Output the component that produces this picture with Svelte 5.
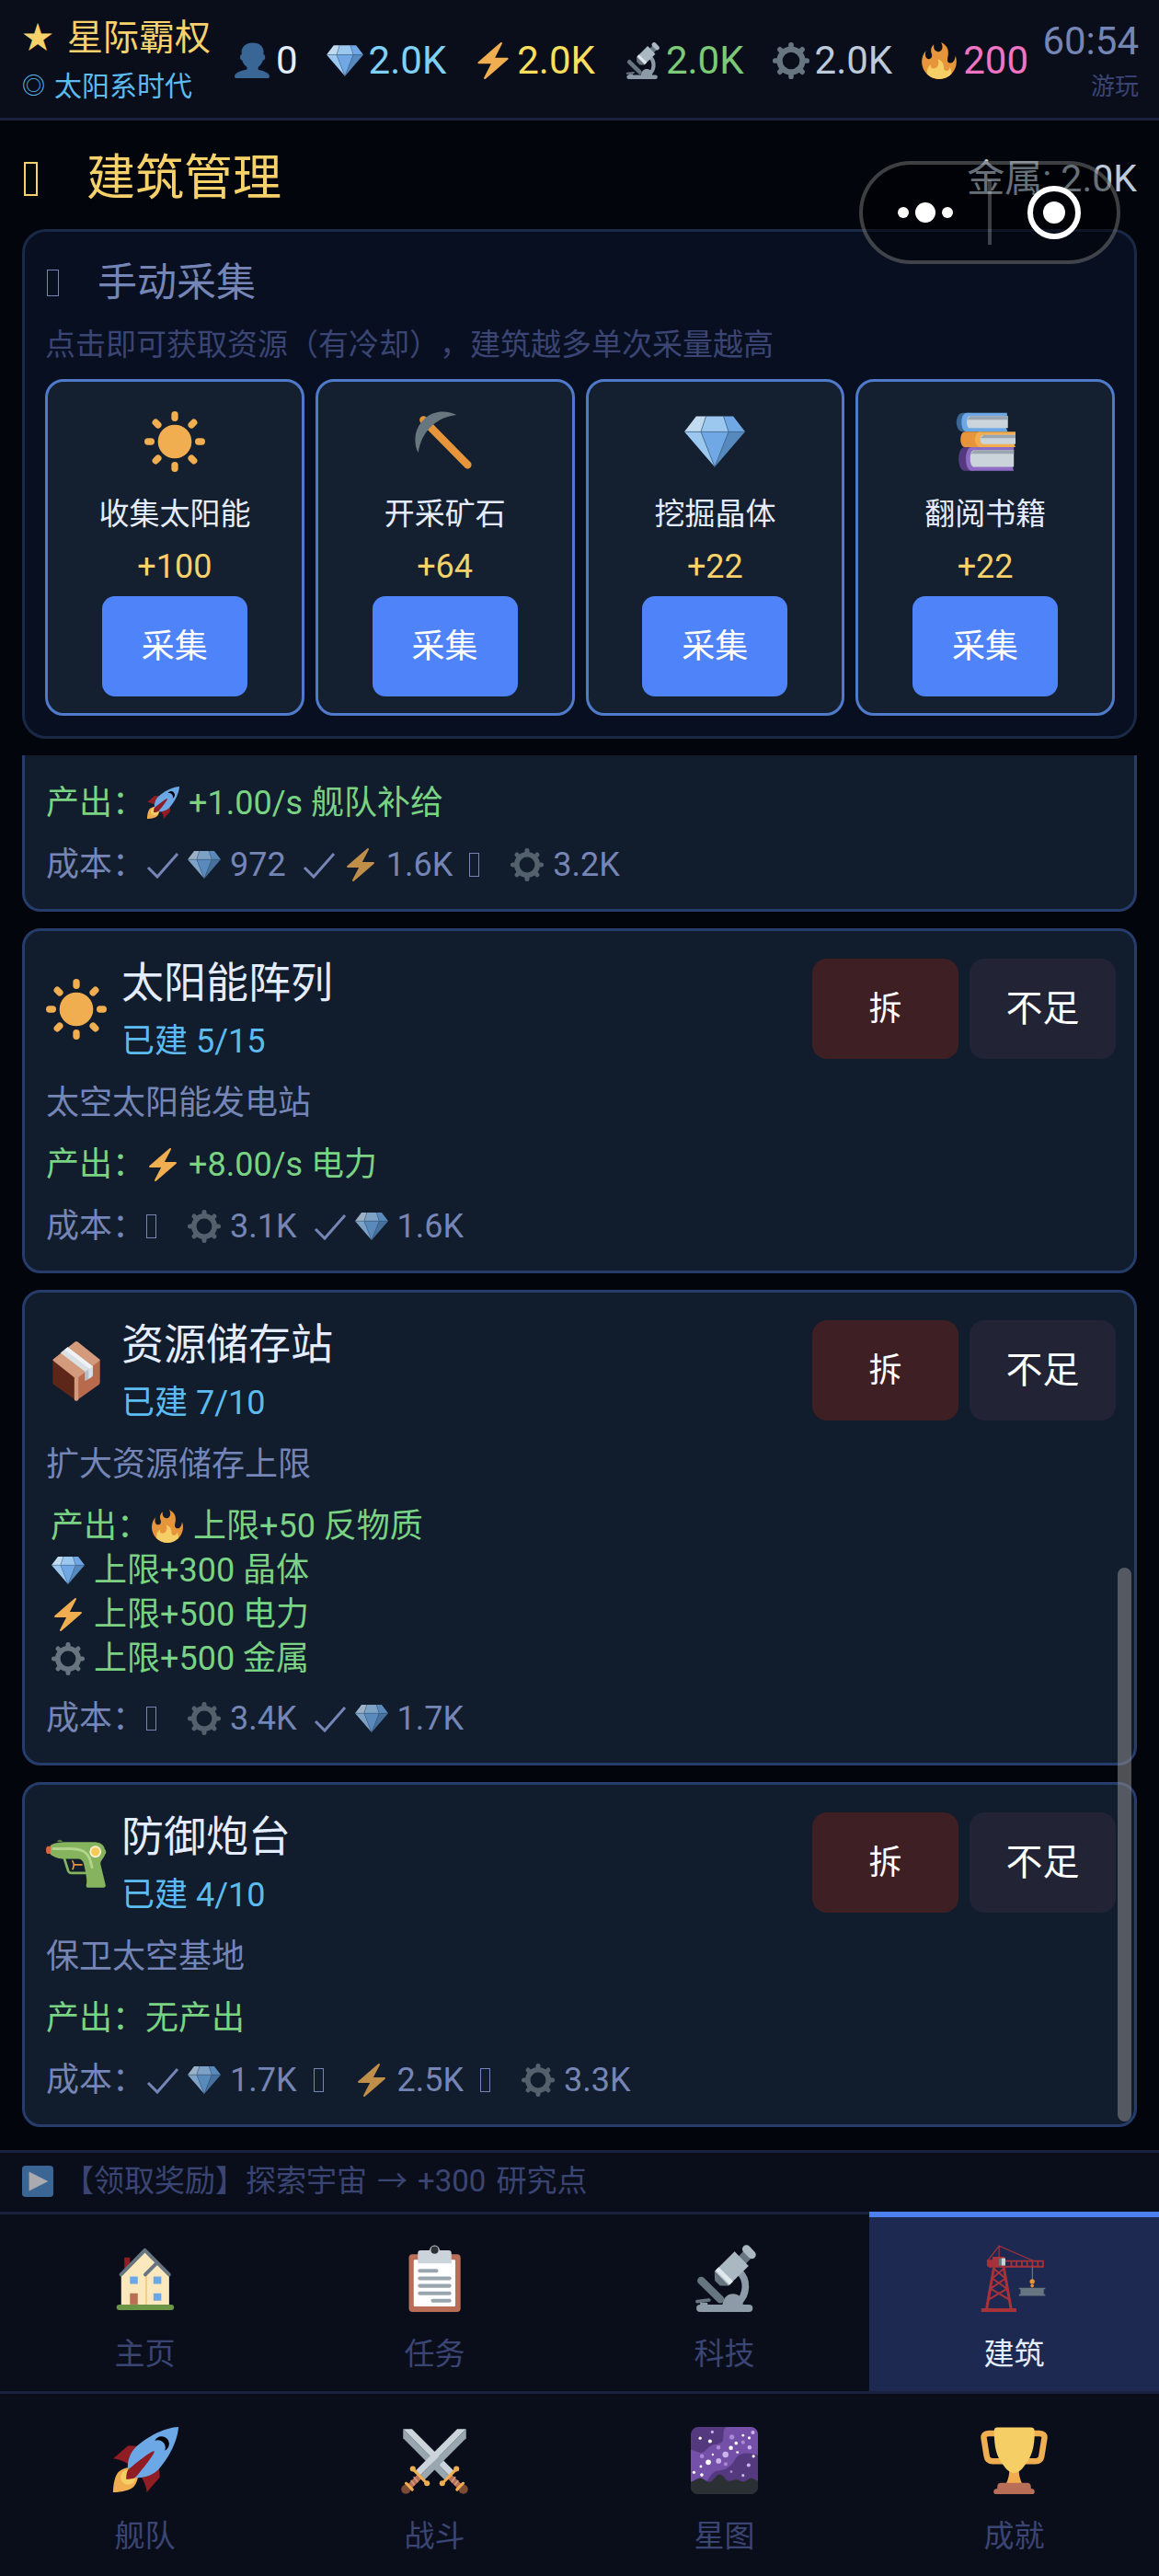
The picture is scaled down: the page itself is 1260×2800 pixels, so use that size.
<script lang="ts">
  const spokes = [0, 45, 90, 135, 180, 225, 270, 315];
  const rays = (attrs: string) =>
    spokes.map((a) => `<rect ${attrs} transform="rotate(${a} 18 18)"/>`).join('');

  const stars = [
    [5, 6, 0.8], [11.5, 2.7, 0.8], [10.3, 7.6, 1], [22, 5.4, 1.3], [28, 4.5, 0.7], [33.3, 3, 1], [31.3, 5.8, 0.8],
    [28, 8.2, 1], [24.3, 8.7, 0.9], [31.5, 11, 1.1], [21.5, 11.2, 1.1], [14.8, 11, 1.1], [25, 13.6, 0.7], [18.6, 14.8, 1.6],
    [11.8, 14.8, 0.6], [6, 15.7, 1.1], [33.6, 15.7, 0.8], [14.9, 18.2, 1.4], [9.4, 18.9, 1.4], [18.7, 19.9, 1],
    [5.4, 21.2, 0.7], [31, 20.5, 1], [1.7, 24.3, 0.8], [21.7, 24, 0.7], [5.9, 25.7, 0.9], [28, 26, 0.8]
  ];
  const starTint = ['#fff', '#c9b5ea', '#fff', '#a98ad6'];

  const icons: Record<string, string> = {
    gem: `<path fill="#c3dbf0" d="M7 3h5.8L9.8 12.2H0z"/><path fill="#9cc8f0" d="M12.8 3h10.4l3 9.2H9.8zM0 12.2h9.8L18 33z"/><path fill="#6fa8e4" d="M23.2 3H29l7 9.2h-9.8zM9.8 12.2h16.4L18 33z"/><path fill="#5689bd" d="M26.2 12.2H36L18 33z"/><path fill="none" stroke="#42698f" stroke-width=".4" d="M0 12.2h36M12.8 3l-3 9.2L18 33l8.2-20.8-3-9.2"/>`,
    bolt: `<path fill="#f0ae50" d="M32.938 15.651C32.792 15.26 32.418 15 32 15H19.925L26.89 1.458c.219-.426.106-.947-.271-1.243C26.437.071 26.218 0 26 0c-.233 0-.466.082-.653.243L18 6.588 3.347 19.243c-.316.273-.43.714-.284 1.105S3.582 21 4 21h12.075L9.11 34.542c-.219.426-.106.947.271 1.243.182.144.401.215.619.215.233 0 .466-.082.653-.243L18 29.412l14.653-12.655c.317-.273.43-.714.285-1.106z"/>`,
    fire: `<path fill="#e6953a" d="M35 19c0-2.062-.367-4.039-1.04-5.868-.46 5.389-3.333 8.157-6.335 6.868-2.812-1.208-.917-5.917-.777-8.164.236-3.809-.012-8.169-6.931-11.794 2.875 5.5.333 8.917-2.333 9.125-2.958.231-5.667-2.542-4.667-7.042-3.238 2.386-3.332 6.402-2.333 9 1.042 2.708-.042 4.958-2.583 5.208-2.84.28-4.418-3.041-2.963-8.333C2.52 10.965 1 14.805 1 19c0 9.389 7.611 17 17 17s17-7.611 17-17z"/><path fill="#f5ce66" d="M28.394 23.999c.148 3.084-2.561 4.293-4.019 3.709-2.106-.843-1.541-2.291-2.083-5.291s-2.625-5.083-5.708-6c2.25 6.333-1.247 8.667-3.08 9.084-1.872.426-3.753-.001-3.968-4.007C7.352 23.668 6 26.676 6 30c0 .368.023.73.055 1.09C9.125 34.124 13.342 36 18 36s8.875-1.876 11.945-4.91c.032-.36.055-.722.055-1.09 0-2.187-.584-4.236-1.606-6.001z"/>`,
    sun: `<g fill="#f0ae50">${rays('x="16" y="0" width="4" height="6" rx="2"')}<circle cx="18" cy="18" r="10"/></g>`,
    gear: `<g fill="#66757f">${rays('x="15.5" y="0" width="5" height="8" rx="2.3"')}<circle cx="18" cy="18" r="11.2" fill="none" stroke="#66757f" stroke-width="5.6"/></g>`,
    rocket: `<path fill="#901c24" d="M1 17l8-7 16 1 1 16-7 8s.001-5.999-6-12-12-6-12-6z"/><path fill="#f0ae50" d="M.973 35s-.036-7.979 2.985-11S15 21.187 15 21.187 14.999 29 11.999 32c-3 3-11.026 3-11.026 3z"/><circle fill="#f5ce66" cx="9" cy="27" r="4"/><path fill="#6ca8e6" d="M35.999 0s-10 0-22 10c-6 5-6 14-4 16s11 2 16-4c10-12 10-22 10-22z"/><path fill="#000" d="M26.999 5c-1.623 0-3.013.971-3.641 2.36.502-.227 1.055-.36 1.641-.36 2.209 0 4 1.791 4 4 0 .586-.133 1.139-.359 1.64 1.389-.627 2.359-2.017 2.359-3.64 0-2.209-1.791-4-4-4z"/><path fill="#901c24" d="M8 28s0-4 1-5 13.001-10.999 14-10-9.001 13-10.001 14S8 28 8 28z"/>`,
    person: `<path fill="#3a6696" d="M24 26.799v-2.566c2-1.348 4.08-3.779 4.703-6.896.186.103.206.17.413.17.991 0 1.709-1.287 1.709-2.873 0-1.562-.823-2.827-1.794-2.865.187-.674.293-1.577.293-2.735C29.324 5.168 26 .527 18.541.527c-6.629 0-10.777 4.641-10.777 8.507 0 1.123.069 2.043.188 2.755-.911.137-1.629 1.352-1.629 2.845 0 1.587.804 2.873 1.796 2.873.206 0 .025-.067.209-.17C8.952 20.453 11 22.885 13 24.232v2.414c-5 .645-12 3.437-12 6.23v1.061C1 35 2.076 35 3.137 35h29.725C33.924 35 35 35 35 33.938v-1.061c0-2.615-6-5.225-11-6.078z"/>`,
    scope: `<path fill="none" stroke="#8c9ba7" stroke-width="3.8" d="M26 14.5c4.6 4 4.4 12.500-.8 16.500"/><path fill="#8c9ba7" d="M5 32h12c.4-3.600 2.600-5.800 5.600-5.800S28 28.500 28 32h3.200a2 2 0 0 1 0 4H5a2 2 0 0 1 0-4z"/><path stroke="#66757f" stroke-width="4.200" stroke-linecap="round" d="M5.600 19.200l10.200 10"/><path stroke="#66757f" stroke-width="1.800" stroke-linecap="round" d="M3.400 30.400l6.400-.8"/><path fill="#8c9ba7" d="M5 31h4v1.500H5z"/><path fill="#66757f" d="M12.700 14.500l.2 4.700 2.800 2.800h4.500zM28.400 3.200l4 4-3.600 3.800-4-4z"/><path fill="#aab8c2" d="M23.500 3.600l7.500 7.800L20.200 22l-7.500-7.700z"/><path fill="#e1e8ed" d="M15 11.900l7.700 7.700-1.800 1.800-7.700-7.700z"/><path stroke="#aab8c2" stroke-width="4.400" stroke-linecap="round" d="M29.800 2.300l2.900 3"/>`,
    pick: `<path stroke="#e6953a" stroke-width="4.600" stroke-linecap="round" d="M5.100 5.200l26.200 26.600"/><path fill="#68777f" d="M24.700 2.200C19-.8 10.500-.6 5.300 4.900-.6 10.600-.9 19 2 24.700 3 18 5.500 13.200 9.300 9.400 13 5.700 18 3 24.700 2.200z"/>`,
    books: `<path fill="#3a6696" d="M5 1h5v11.200H5C2.300 12.200 1 9.500 1 6.600S2.300 1 5 1z"/><path fill="#6ca8e6" d="M7.500 1H31v2l-.5 7 .8 2.200H7.500C5 12.200 4 9.800 4 6.600S5 1 7.500 1z"/><path fill="#ccd4db" d="M9 2.800h22.500V10H9C6.500 10 6.500 2.800 9 2.800z"/><path fill="#99a6b0" d="M9 2.800h22.500V5H7.200z"/><path fill="#e6953a" d="M6 12.200h9v9.100H6c-3.400 0-3.400-9.100 0-9.100z"/><path fill="#f0ae50" d="M15 12.200h21V14l-1 5 1 2.300H15c-4 0-4-9.100 0-9.100z"/><path fill="#ccd4db" d="M17 14h19v5.500H17c-2.600 0-2.600-5.500 0-5.500z"/><path fill="#99a6b0" d="M17 14h19v2H15.300z"/><path fill="#54397f" d="M6 21.300h6v14H6c-5 0-5-14 0-14z"/><path fill="#8e6cc4" d="M10 21.300h25V23l-1 9 1 3.300H10c-4.600 0-4.600-14 0-14z"/><path fill="#ccd4db" d="M11.500 23H35v10H11.500c-3.200 0-3.200-10 0-10z"/><path fill="#99a6b0" d="M11.500 23H35v2.200H9.400z"/>`,
    box: `<path fill="#5c2619" d="M4 11.500l14 10.700v13.500L4.800 26.300c-.5-.4-.8-.8-.8-1.500z"/><path fill="#b9694c" d="M32 11.500L18 22.200v13.500l13.200-9.400c.5-.4.8-.8.8-1.500z"/><path fill="#d49a7c" d="M17.200.8c.6-.4 1-.4 1.600 0L31.600 11c.5.400.5.700 0 1.100L19.200 22v13.200c-.6.900-1.800.9-2.400 0V22L4.400 12.100c-.5-.4-.5-.7 0-1.100z"/><path fill="#d9dfe3" d="M12.900 4l14.900 11.400v5.100c0 .8-.6 1.200-1.200 1.600l-3.400 1.700v-5.200L8.600 7.300z"/><path fill="#b4bfc7" d="M23.200 18.600l2-1.400v5.600l-2 1z"/><path fill="#eef2f4" d="M12.900 4l14.900 11.400-2 1.400L11 5.500z"/>`,
    gun: `<path fill="none" stroke="#86b35e" stroke-width="1.500" d="M10.600 14.500l2.600 8.200c.3.800.8 1.200 1.800 1.200h9"/><path fill="none" stroke="#e6953a" stroke-width=".9" d="M15.500 16.500c1.400 1.800 1.300 3.400.2 5.500M16.600 19h5"/><path fill="#d9643c" d="M2.800 8H1.500C.3 8 0 9 0 10.300s.3 2.300 1.500 2.300h1.300z"/><path fill="#577a3c" d="M6.500 5.500c.5-1.700 2.500-1.700 3.500 0z"/><path fill="#86b35e" d="M2.700 7.500C6 5.300 12 5.600 18 5.600h10c3.800 0 6.500 1.300 6.900 4.400.9.200.9 2.600.1 3-.4 2-2.700 3.400-2.700 5.500L35.300 31c.2 1-.4 1.600-1.300 1.600h-9c-.9 0-1.400-.9-1.100-1.800.8-2.300-.6-8.500-1.500-12.300-.5-2-1.600-3-3.400-3H10c-3.300 0-5.300-1.200-7.300-2.500z"/><path fill="none" stroke="#b2d48c" stroke-width="1.600" stroke-linecap="round" d="M4.300 9.500h10c7 0 10 2 11.800 6.500l1.200 4.500"/><circle cx="29.300" cy="11.300" r="3.500" fill="#fff1cf"/><circle cx="29.300" cy="11.300" r="2.500" fill="#f5c95a"/>`,
    house: `<path fill="#901c24" d="M7 6.800h3V15H7z"/><path fill="#fbe8bd" d="M5.300 16L18 3l13 13v16.500H5.300z"/><path fill="#f5ce80" d="M18.200 16h1v16h-1z"/><path fill="none" stroke="#66757f" stroke-width="1.900" stroke-linecap="round" stroke-linejoin="round" d="M5.200 16L18 2.900 31 16M24.500 9.700L18.200 16"/><path fill="#6ca8e6" d="M10 17h4.200v4H10zM22.600 17h4.200v4h-4.200zM22.600 26h4.200v4h-4.200z"/><path fill="#b96f52" d="M10 26h4.200v6H10z"/><rect x="2.800" y="32" width="30.800" height="3" rx="1.500" fill="#6b9645"/>`,
    clip: `<rect x="4.200" y="5" width="27.700" height="31" rx="2" fill="#b96f57"/><rect x="6.800" y="8" width="22.300" height="25" rx=".6" fill="#fff"/><path fill="#ccd4db" d="M10.500 3h4.800a2.700 2.700 0 0 1 5.400 0h4.800c1 0 1.500.6 1.500 1.500V10H9V4.500C9 3.600 9.500 3 10.500 3z"/><circle cx="18" cy="2.800" r="2" fill="#2b3034"/><path stroke="#99a6b0" stroke-width="2" stroke-linecap="round" d="M10 13.900h9M10 18h16M10 22h16M10 26h16M17 30h9"/>`,
    crane: `<g fill="none" stroke="#a8323a"><path stroke-width="1.500" d="M7.200 12L3.300 34M12.400 12l3.900 22"/><path stroke-width="1" d="M6.800 12.500l6.600 5.500M12.800 12.500L6.300 18M6.300 18l7.800 5.500M13.400 18l-8 5.500M5.400 23.500l9.800 5.800M14.300 23.500l-9.800 5.800"/><path stroke-width=".6" d="M3.800 8.600L9.900.6l18 7.800M9.900.6v7"/><path stroke-width=".9" d="M13 8.700h20.500v3H13M16.500 8.700v3M19.300 8.700v3M22.200 8.700v3M25 8.700v3M27.800 8.700v3M30.700 8.700v3"/></g><path fill="#a8323a" d="M.4 34h18.800v2H.4zM3.400 8h3V6.400h6.500v5.800H4.600l-1.200-1z"/><path fill="#66757f" d="M9.800 7.200h1.700v3.900H9.800z"/><path fill="#ccd4db" d="M11.300 7.200h2v3.900h-2z"/><path stroke="#66757f" stroke-width=".6" d="M27.800 12v7"/><g fill="#e6953a"><circle cx="27.700" cy="19.700" r="1.300"/><circle cx="27.700" cy="22" r=".9"/></g><path fill="#66757f" d="M20.600 23h14.100v.8h-.8V26.500h.8v.9H20.600v-.9h.8v-2.700h-.8z"/>`,
    swords: ['translate(36 0) scale(-1 1)', 'translate(0 0)'].map((t) => `<g transform="${t}"><path fill="#ccd4db" d="M30.100 1.100h4.800L10.200 26 7.800 23.400z"/><path fill="#99a6b0" d="M34.900 1.100v4.900L12.600 28.400 10.200 26z"/><path stroke="#b96f57" stroke-width="3" d="M10 26.500l-6.500 6.500"/><path stroke="#d49a7c" stroke-width=".8" d="M6.800 26.700l2.200 3M5.300 28.600l2 2.600"/><path stroke="#f0ae50" stroke-width="1.500" stroke-linecap="round" d="M6.400 22.600l7.400 7.600M2.700 30.200l3.300 3.300"/><circle cx="6.300" cy="22.400" r="1.500" fill="#f0ae50"/><circle cx="13.900" cy="30.200" r="1.500" fill="#f0ae50"/><circle cx="2.600" cy="33.400" r="2.500" fill="#7d4a36"/><path stroke="#f0ae50" stroke-width="1.300" stroke-linecap="round" d="M2.700 30.200l3.300 3.500"/></g>`).join(''),
    galaxy: `<rect width="36" height="36" rx="4" fill="#54397f"/><path fill="#7450a8" d="M36 4v11c-5-1-9-2-12 2-3 5-5 6-10 6.500-3 .5-4.500 5-6 6.500L0 31V12.200c3 .5 4 2 6 1.500 3-1 3-4 8-4.500 3.500-.4 3.500-2 3.500-6 0-1.500.5-2.500 1.500-3.200h13c2.500 0 4 1.800 4 4z"/>${stars.map(([x, y, r], i) => `<circle cx="${x}" cy="${y}" r="${r}" fill="${starTint[i % 4]}"/>`).join('')}<path fill="#2b3034" d="M0 29.500c2-.5 4-2.500 5.500-2 2 .5 3 2 4.500 2 2.500-.5 3.500-4 5.500-4 2.500.3 3 3.500 5 3.500 1.500 0 2.500-.8 4-.8s2.500 1.300 4 1.100 2.500-1.800 4-1.800 2 1.200 3.500 1.500v3c0 2.400-1.600 4-4 4H4c-2.400 0-4-1.600-4-4z"/>`,
    trophy: `<path fill="none" stroke="#f0ae50" stroke-width="3.200" d="M9 3.500H4.400c-2 0-2.900 1-2.600 2.800l1.500 9.400c.3 1.900 1.300 2.700 3.300 2.700h22.800c2 0 3-.8 3.300-2.700l1.500-9.400c.3-1.800-.6-2.800-2.600-2.800H27"/><path fill="#f0ae50" d="M15.500 22h5c0 3.500.5 6 2 9h-9c1.500-3 2-5.500 2-9z"/><path fill="#f5ce66" d="M9 .3h18c1.300 0 2 .8 2 2 0 8.700-1.500 13.700-5.500 18.500-1.500 2-3 3.800-5.500 3.800s-4-1.800-5.500-3.800C8.500 16 7.300 11 7.300 2.300 7.300 1 7.700.3 9 .3z"/><path fill="#b96f57" d="M11 30h14c1.300 0 2 .8 2 2v1c1.400 0 2 .6 2 1.800 0 .8-.3 1.200-1 1.200H8c-.7 0-1-.4-1-1.200C7 33.600 7.600 33 9 33v-1c0-1.200.7-2 2-2z"/>`,
    play: `<rect width="36" height="36" rx="4" fill="#3b6592"/><path fill="#a9abb0" d="M8 7l22 11L8 29z"/>`
  };

  const resources = [
    { icon: 'person', value: '0', tone: 'white' },
    { icon: 'gem', value: '2.0K', tone: 'sky' },
    { icon: 'bolt', value: '2.0K', tone: 'yellow' },
    { icon: 'scope', value: '2.0K', tone: 'green' },
    { icon: 'gear', value: '2.0K', tone: 'silver' },
    { icon: 'fire', value: '200', tone: 'pink' }
  ];

  const gathers = [
    { icon: 'sun', name: '收集太阳能', gain: '+100' },
    { icon: 'pick', name: '开采矿石', gain: '+64' },
    { icon: 'gem', name: '挖掘晶体', gain: '+22' },
    { icon: 'books', name: '翻阅书籍', gain: '+22' }
  ];

  type Building = {
    icon?: string;
    name?: string;
    built?: string;
    desc?: string;
    out: { icon?: string; text: string }[];
    cost: { ok: boolean; icon: string; text: string }[];
  };

  const buildings: Building[] = [
    {
      out: [{ icon: 'rocket', text: '+1.00/s 舰队补给' }],
      cost: [
        { ok: true, icon: 'gem', text: '972' },
        { ok: true, icon: 'bolt', text: '1.6K' },
        { ok: false, icon: 'gear', text: '3.2K' }
      ]
    },
    {
      icon: 'sun', name: '太阳能阵列', built: '已建 5/15', desc: '太空太阳能发电站',
      out: [{ icon: 'bolt', text: '+8.00/s 电力' }],
      cost: [
        { ok: false, icon: 'gear', text: '3.1K' },
        { ok: true, icon: 'gem', text: '1.6K' }
      ]
    },
    {
      icon: 'box', name: '资源储存站', built: '已建 7/10', desc: '扩大资源储存上限',
      out: [
        { icon: 'fire', text: '上限+50 反物质' },
        { icon: 'gem', text: '上限+300 晶体' },
        { icon: 'bolt', text: '上限+500 电力' },
        { icon: 'gear', text: '上限+500 金属' }
      ],
      cost: [
        { ok: false, icon: 'gear', text: '3.4K' },
        { ok: true, icon: 'gem', text: '1.7K' }
      ]
    },
    {
      icon: 'gun', name: '防御炮台', built: '已建 4/10', desc: '保卫太空基地',
      out: [{ text: '无产出' }],
      cost: [
        { ok: true, icon: 'gem', text: '1.7K' },
        { ok: false, icon: 'bolt', text: '2.5K' },
        { ok: false, icon: 'gear', text: '3.3K' }
      ]
    }
  ];

  const tabs = [
    { icon: 'house', label: '主页' },
    { icon: 'clip', label: '任务' },
    { icon: 'scope', label: '科技' },
    { icon: 'crane', label: '建筑' },
    { icon: 'rocket', label: '舰队' },
    { icon: 'swords', label: '战斗' },
    { icon: 'galaxy', label: '星图' },
    { icon: 'trophy', label: '成就' }
  ];
  let current = $state('建筑');
</script>

{#snippet icon(name: string)}
  <svg class="icon" viewBox="0 0 36 36" fill="none" aria-hidden="true">{@html icons[name]}</svg>
{/snippet}

<div class="page">
  <header class="top">
    <div class="brand">
      <div class="game"><span class="star">★</span>星际霸权</div>
      <div class="era"><span class="ring">◎</span>太阳系时代</div>
    </div>
    <ul class="resources">
      {#each resources as r}
        <li class={r.tone}>{@render icon(r.icon)}<span>{r.value}</span></li>
      {/each}
    </ul>
    <div class="clock">
      <div class="time">60:54</div>
      <div class="played">游玩</div>
    </div>
  </header>

  <main>
    <div class="heading">
      <h1><span class="blank"></span>建筑管理</h1>
      <span class="metal">金属: 2.0K</span>
      <div class="capsule">
        <button aria-label="更多">
          <svg viewBox="0 0 60 24" width="60" height="24" fill="#fff"><circle cx="6" cy="12" r="6" /><circle cx="30" cy="12" r="11" /><circle cx="54" cy="12" r="6" /></svg>
        </button>
        <i></i>
        <button aria-label="关闭">
          <svg viewBox="0 0 58 58" width="58" height="58"><circle cx="29" cy="29" r="26" fill="none" stroke="#fff" stroke-width="6" /><circle cx="29" cy="29" r="12" fill="#fff" /></svg>
        </button>
      </div>
    </div>

    <section class="manual">
      <h2><span class="blank"></span>手动采集</h2>
      <p>点击即可获取资源（有冷却），建筑越多单次采量越高</p>
      <div class="gathers">
        {#each gathers as g}
          <div class="gather">
            {@render icon(g.icon)}
            <div class="gname">{g.name}</div>
            <div class="gain">{g.gain}</div>
            <button>采集</button>
          </div>
        {/each}
      </div>
    </section>

    <section class="list">
      {#each buildings as b}
        <article class:cut={!b.name}>
          {#if b.name}
            <div class="bhead">
              {@render icon(b.icon ?? '')}
              <div class="btitle">
                <h3>{b.name}</h3>
                <div class="built">{b.built}</div>
              </div>
              <button class="remove">拆</button>
              <button class="lack">不足</button>
            </div>
            <p class="row">{b.desc}</p>
          {/if}
          <div class="row out" class:multi={b.out.length > 1}>
            {#each b.out as o, i}
              <div class="line">
                {#if i === 0}<span>产出：</span>{/if}
                {#if o.icon}{@render icon(o.icon)}{/if}
                <span>{o.text}</span>
              </div>
            {/each}
          </div>
          <div class="row cost">
            <span>成本：</span>
            {#each b.cost as c}
              <span class="price">
                <span class="mark">
                  {#if c.ok}
                    <svg viewBox="0 0 36 36" width="36" height="36" fill="none" stroke="currentColor" stroke-width="3" aria-hidden="true"><path d="M2 21l10 10L34 6" /></svg>
                  {:else}
                    <span class="blank"></span>
                  {/if}
                </span>
                {@render icon(c.icon)}
                <span>{c.text}</span>
              </span>
            {/each}
          </div>
        </article>
      {/each}
      <div class="thumb"></div>
    </section>
  </main>

  <footer>
    <div class="ticker">
      {@render icon('play')}
      <span>【领取奖励】探索宇宙</span>
      <span>→</span>
      <span>+300</span>
      <span>研究点</span>
    </div>
    <nav>
      {#each tabs as t}
        <button class:active={current === t.label} onclick={() => (current = t.label)}>
          {@render icon(t.icon)}
          <span>{t.label}</span>
        </button>
      {/each}
    </nav>
  </footer>
</div>

<style>
  :global(body) {
    background: #03050d;
  }
  .page {
    font-family: Roboto, 'Noto Sans CJK SC', sans-serif;
    font-size: 36px;
    line-height: 48px;
    text-spacing-trim: space-all;
    color: #7585b5;
    background: #03050d;
    min-height: 100vh;
    display: flex;
    flex-direction: column;
  }
  h1, h2, h3, p, ul {
    margin: 0;
    padding: 0;
    font-weight: 400;
    list-style: none;
  }
  button {
    font: inherit;
    color: #fff;
    border: 0;
    padding: 0;
    background: none;
    cursor: pointer;
  }
  .icon {
    width: 36px;
    height: 36px;
    flex: none;
    display: block;
  }
  .blank {
    display: block;
    box-sizing: border-box;
    border: 1px solid currentColor;
    width: 11px;
    height: 26px;
  }

  .top {
    display: flex;
    align-items: center;
    height: 124px;
    padding: 4px 22px 0 24px;
    background: #0a0e1b;
    border-bottom: 3px solid #1a2240;
  }
  .brand {
    width: 230px;
  }
  .game, .era {
    display: flex;
    align-items: center;
    white-space: nowrap;
  }
  .game {
    font-size: 39px;
    line-height: 54px;
    color: #f7d26a;
    gap: 15px;
  }
  .star {
    font-size: 34px;
  }
  .era {
    margin-top: 2px;
    font-size: 30px;
    line-height: 48px;
    color: #5cbcf0;
    gap: 10px;
  }
  .ring {
    font-size: 25px;
  }
  .resources {
    display: flex;
    gap: 31px;
    flex: 1;
  }
  .resources li {
    display: flex;
    align-items: center;
    gap: 6px;
    font-size: 42px;
  }
  .resources .icon {
    width: 40px;
    height: 40px;
  }
  .white { color: #e4ecff; }
  .sky { color: #7fd0f7; }
  .yellow { color: #fadf5e; }
  .green { color: #7cc977; }
  .silver { color: #bccada; }
  .pink { color: #f074c4; }
  .clock {
    text-align: right;
  }
  .time {
    padding-top: 6px;
    font-size: 42px;
    line-height: 50px;
  }
  .played {
    font-size: 26px;
    color: #3a4573;
  }

  main {
    padding: 0 24px;
    flex: 1;
  }
  .heading {
    position: relative;
    display: flex;
    align-items: center;
    justify-content: space-between;
    height: 110px;
    padding-top: 8px;
  }
  h1 {
    display: flex;
    align-items: center;
    gap: 53px;
    padding-left: 2px;
    font-size: 53px;
    line-height: 72px;
    color: #f7d26a;
  }
  h1 .blank {
    width: 15px;
    height: 37px;
    border-width: 2px;
  }
  .metal {
    font-size: 41px;
    color: #bccada;
  }
  .capsule {
    position: absolute;
    z-index: 2;
    top: 44px;
    right: 18px;
    width: 284px;
    height: 112px;
    box-sizing: border-box;
    border: 4px solid rgba(255, 255, 255, 0.24);
    border-radius: 56px;
    background: rgba(0, 0, 0, 0.45);
    display: flex;
    align-items: center;
  }
  .capsule button {
    flex: 1;
    display: flex;
    justify-content: center;
  }
  .capsule i {
    width: 4px;
    height: 70px;
    background: rgba(255, 255, 255, 0.24);
  }

  .manual {
    border: 3px solid #1a2945;
    border-radius: 26px;
    background: #080f21;
    padding: 25px 21px 22px 22px;
  }
  h2 {
    display: flex;
    align-items: center;
    gap: 42px;
    padding-left: 2px;
    font-size: 43px;
    line-height: 60px;
  }
  h2 .blank {
    width: 13px;
    height: 29px;
  }
  .manual p {
    margin-top: 14px;
    font-size: 33px;
    color: #3a4573;
  }
  .gathers {
    display: grid;
    grid-template-columns: repeat(4, 1fr);
    gap: 12px;
    margin-top: 13px;
  }
  .gather {
    display: flex;
    flex-direction: column;
    align-items: center;
    padding: 32px 0 18px;
    border: 3px solid #4f79c9;
    border-radius: 20px;
    background: #14202f;
    line-height: 44px;
  }
  .gather .icon {
    width: 66px;
    height: 66px;
  }
  .gname {
    margin-top: 24px;
    font-size: 33px;
    color: #e4ecff;
  }
  .gain {
    margin-top: 13px;
    color: #f7d26a;
  }
  .gather button {
    margin-top: 10px;
    width: 158px;
    height: 109px;
    border-radius: 14px;
    background: #4f83f9;
  }

  .list {
    position: relative;
    display: flex;
    flex-direction: column;
    gap: 18px;
    padding: 18px 0 25px;
  }
  article {
    border: 3px solid #263c6b;
    border-radius: 20px;
    background: #111c2d;
    padding: 25px 20px 24px 23px;
  }
  .cut {
    border-top: 0;
    border-radius: 0 0 20px 20px;
    padding-top: 28px;
  }
  .bhead {
    display: flex;
    align-items: center;
    margin-bottom: 19px;
  }
  .bhead .icon {
    width: 66px;
    height: 66px;
  }
  .btitle {
    flex: 1;
    margin-left: 16px;
  }
  h3 {
    font-size: 46px;
    line-height: 62px;
    color: #e4ecff;
  }
  .built {
    margin-top: 9px;
    color: #5cbcf0;
  }
  .bhead button {
    width: 159px;
    height: 109px;
    border-radius: 16px;
    margin-left: 12px;
  }
  .remove {
    background: #3e2024;
  }
  .bhead .lack {
    font-size: 40px;
    background: #222436;
  }
  .row + .row {
    margin-top: 19px;
  }
  .line {
    display: flex;
    align-items: center;
  }
  .line .icon {
    margin-left: 1px;
    margin-right: 10px;
  }
  .out {
    color: #7ad283;
  }
  .multi {
    padding-left: 5px;
  }
  .row.multi + .cost {
    margin-top: 17px;
  }
  .cost, .price {
    display: flex;
    align-items: center;
  }
  .price {
    margin-left: 1px;
  }
  .price + .price {
    margin-left: 18px;
  }
  .price .icon {
    margin: 0 10px 0 9px;
    opacity: 0.78;
  }
  .mark {
    width: 36px;
  }
  .mark svg {
    display: block;
  }
  .thumb {
    position: absolute;
    right: 6px;
    bottom: 31px;
    width: 15px;
    height: 602px;
    border-radius: 8px;
    background: rgba(142, 142, 142, 0.55);
  }

  footer {
    background: #0a0e1b;
  }
  .ticker {
    display: flex;
    align-items: center;
    gap: 11px;
    height: 62px;
    padding: 0 24px 2px;
    border-top: 3px solid #1a2240;
    font-size: 33px;
    color: #3a4573;
  }
  .ticker .icon {
    width: 34px;
    height: 34px;
  }
  nav {
    display: grid;
    grid-template-columns: repeat(4, 1fr);
    grid-template-rows: 195px 201px;
  }
  nav button {
    display: flex;
    flex-direction: column;
    align-items: center;
    padding-top: 33px;
    border-top: 3px solid #1a2240;
    font-size: 33px;
    color: #3a4573;
  }
  nav button:nth-child(n + 5) {
    padding-top: 36px;
  }
  nav .icon {
    width: 73px;
    height: 73px;
    margin-bottom: 22px;
  }
  nav button.active {
    padding-top: 30px;
    border-top: 6px solid #4c7ff0;
    background: #1d2950;
    color: #e4ecff;
  }
</style>
